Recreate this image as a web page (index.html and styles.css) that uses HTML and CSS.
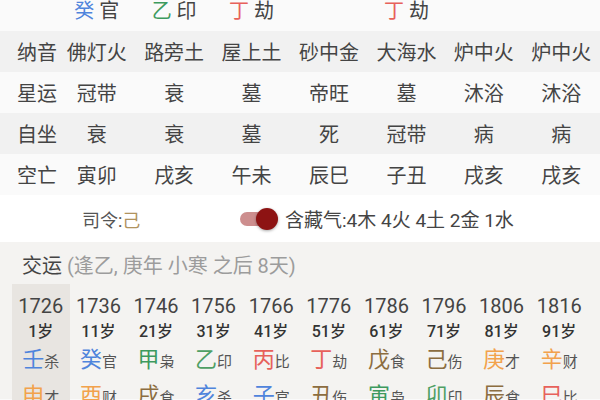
FILE: index.html
```html
<!DOCTYPE html>
<html lang="zh">
<head>
<meta charset="utf-8">
<link rel="stylesheet" href="styles.css">
</head>
<body>
<div class="page">
  <div class="row first">
    <div class="lbl"></div>
    <div class="v"><span class="water">癸</span> 官</div>
    <div class="v"><span class="wood">乙</span> 印</div>
    <div class="v"><span class="fire">丁</span> 劫</div>
    <div class="v"></div>
    <div class="v"><span class="fire">丁</span> 劫</div>
    <div class="v"></div>
    <div class="v"></div>
  </div>
  <div class="row alt">
    <div class="lbl">纳音</div>
    <div class="v">佛灯火</div>
    <div class="v">路旁土</div>
    <div class="v">屋上土</div>
    <div class="v">砂中金</div>
    <div class="v">大海水</div>
    <div class="v">炉中火</div>
    <div class="v">炉中火</div>
  </div>
  <div class="row">
    <div class="lbl">星运</div>
    <div class="v">冠带</div>
    <div class="v">衰</div>
    <div class="v">墓</div>
    <div class="v">帝旺</div>
    <div class="v">墓</div>
    <div class="v">沐浴</div>
    <div class="v">沐浴</div>
  </div>
  <div class="row alt">
    <div class="lbl">自坐</div>
    <div class="v">衰</div>
    <div class="v">衰</div>
    <div class="v">墓</div>
    <div class="v">死</div>
    <div class="v">冠带</div>
    <div class="v">病</div>
    <div class="v">病</div>
  </div>
  <div class="row">
    <div class="lbl">空亡</div>
    <div class="v">寅卯</div>
    <div class="v">戌亥</div>
    <div class="v">午未</div>
    <div class="v">辰巳</div>
    <div class="v">子丑</div>
    <div class="v">戌亥</div>
    <div class="v">戌亥</div>
  </div>

  <div class="siling">
    <div class="sl">司令:<span class="earth-l">己</span></div>
    <div class="toggle"><span class="track"></span><span class="knob"></span></div>
    <div class="cq">含藏气:4木 4火 4土 2金 1水</div>
  </div>

  <div class="dayun-wrap">
    <div class="jy-head"><span class="jy">交运</span>&nbsp;<span class="jy-note">(逢乙, 庚年 小寒 之后 8天)</span></div>
    <div class="dayun">
      <div class="dcol cur">
        <div class="yr">1726</div><div class="age">1岁</div>
        <div class="gz"><span class="big water">壬</span><span class="sm">杀</span></div>
        <div class="gz br"><span class="big metal">申</span><span class="sm">才</span></div>
      </div>
      <div class="dcol">
        <div class="yr">1736</div><div class="age">11岁</div>
        <div class="gz"><span class="big water">癸</span><span class="sm">官</span></div>
        <div class="gz br"><span class="big metal">酉</span><span class="sm">财</span></div>
      </div>
      <div class="dcol">
        <div class="yr">1746</div><div class="age">21岁</div>
        <div class="gz"><span class="big wood">甲</span><span class="sm">枭</span></div>
        <div class="gz br"><span class="big earth">戌</span><span class="sm">食</span></div>
      </div>
      <div class="dcol">
        <div class="yr">1756</div><div class="age">31岁</div>
        <div class="gz"><span class="big wood2">乙</span><span class="sm">印</span></div>
        <div class="gz br"><span class="big water">亥</span><span class="sm">杀</span></div>
      </div>
      <div class="dcol">
        <div class="yr">1766</div><div class="age">41岁</div>
        <div class="gz"><span class="big fire">丙</span><span class="sm">比</span></div>
        <div class="gz br"><span class="big water">子</span><span class="sm">官</span></div>
      </div>
      <div class="dcol">
        <div class="yr">1776</div><div class="age">51岁</div>
        <div class="gz"><span class="big fire">丁</span><span class="sm">劫</span></div>
        <div class="gz br"><span class="big earth">丑</span><span class="sm">伤</span></div>
      </div>
      <div class="dcol">
        <div class="yr">1786</div><div class="age">61岁</div>
        <div class="gz"><span class="big earth">戊</span><span class="sm">食</span></div>
        <div class="gz br"><span class="big wood">寅</span><span class="sm">枭</span></div>
      </div>
      <div class="dcol">
        <div class="yr">1796</div><div class="age">71岁</div>
        <div class="gz"><span class="big earth">己</span><span class="sm">伤</span></div>
        <div class="gz br"><span class="big wood2">卯</span><span class="sm">印</span></div>
      </div>
      <div class="dcol">
        <div class="yr">1806</div><div class="age">81岁</div>
        <div class="gz"><span class="big metal">庚</span><span class="sm">才</span></div>
        <div class="gz br"><span class="big earth">辰</span><span class="sm">食</span></div>
      </div>
      <div class="dcol">
        <div class="yr">1816</div><div class="age">91岁</div>
        <div class="gz"><span class="big metal">辛</span><span class="sm">财</span></div>
        <div class="gz br"><span class="big fire">巳</span><span class="sm">比</span></div>
      </div>
    </div>
  </div>
</div>
</body>
</html>
```

FILE: styles.css
```css
html, body {
  margin: 0;
  padding: 0;
}
body {
  width: 600px;
  height: 400px;
  overflow: hidden;
  background: #fafafa;
  font-family: Roboto, "Noto Sans CJK SC", sans-serif;
  color: #444;
}
.page {
  width: 600px;
}
.row {
  display: grid;
  grid-template-columns: 58px repeat(7, 1fr);
  height: 41px;
  align-items: center;
  font-size: 20px;
  line-height: 28px;
  background: #fafafa;
}
.row.first {
  margin-top: -10px;
}
.row.alt {
  background: #f1f1f1;
}
.row .lbl {
  padding-left: 17px;
  padding-top: 3px;
  white-space: nowrap;
}
.row .v {
  text-align: center;
  padding-top: 3px;
  white-space: nowrap;
}
.row.first .v {
  padding-top: 0;
}

.water { color: #4f84dc; }
.wood { color: #3d9a5e; }
.wood2 { color: #4f9f64; }
.fire { color: #e7615b; }
.earth { color: #8c6d40; }
.metal { color: #f2a24c; }
.earth-l { color: #b0935e; }

.siling {
  display: flex;
  align-items: center;
  height: 47px;
  background: #ffffff;
  font-size: 18px;
  color: #555;
}
.siling .sl {
  padding-left: 82px;
  width: 158px;
  white-space: nowrap;
}
.toggle {
  position: relative;
  width: 38px;
  height: 24px;
  margin-right: 7px;
}
.track {
  position: absolute;
  left: 0;
  top: 5px;
  width: 32px;
  height: 14px;
  border-radius: 7px;
  background: #cd8e8e;
}
.knob {
  position: absolute;
  right: 0;
  top: 1px;
  width: 22px;
  height: 22px;
  border-radius: 50%;
  background: #8d1313;
  box-shadow: 0 1px 3px rgba(0, 0, 0, 0.35);
}
.cq {
  color: #444;
  font-size: 19px;
  white-space: nowrap;
}

.dayun-wrap {
  background: #f4f3f1;
}
.jy-head {
  height: 42px;
  display: flex;
  align-items: center;
  padding-left: 22px;
  padding-top: 2px;
  box-sizing: border-box;
  font-size: 20px;
  white-space: nowrap;
}
.jy {
  color: #444;
}
.jy-note {
  color: #9c9c9c;
}
.dayun {
  display: grid;
  grid-template-columns: repeat(10, 1fr);
  padding: 0 12px;
  height: 115px;
}
.dcol {
  display: flex;
  flex-direction: column;
  align-items: center;
  padding-top: 9px;
}
.dcol.cur {
  background: #e8e5e1;
}
.yr {
  font-size: 20px;
  line-height: 26px;
  color: #444;
}
.age {
  font-size: 16px;
  line-height: 26px;
  font-weight: 500;
  color: #333;
}
.gz {
  line-height: 30px;
  white-space: nowrap;
}
.gz.br {
  margin-top: 4px;
}
.big {
  font-size: 22px;
}
.sm {
  font-size: 15px;
  color: #555;
}
```
